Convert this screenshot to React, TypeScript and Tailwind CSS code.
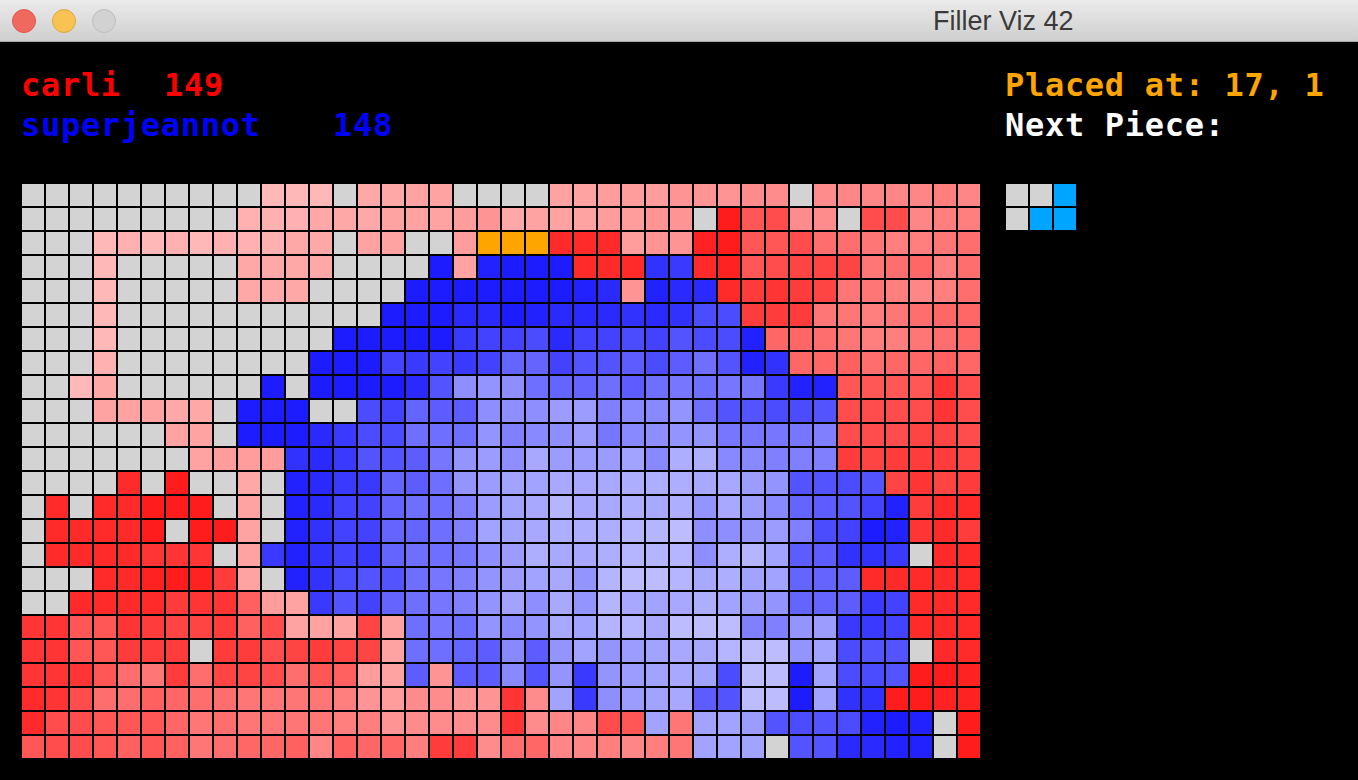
const board = [
  '..........UUU.SSRR....RRQQQPPPOO.ONNNNMN',
  '.........TTTSSSRRRQPSRRRQQPP.AHGOO.GGNMM',
  '...UTUTUTTTSS.RR..Q###CCCQPPBAHHGKKLMMLK',
  '...U.....SSSS....aRbaaaCCCdeCBHGFFFLKJMK',
  '...U.....SSS....aaaaaaabcPbccCEDEFLLMNMK',
  '...U...........aaaccabcccdcdggEEELLMLKJJ',
  '...U.........aaaaaeffgcffgfhggbJJKLMMLKJ',
  '...T........aaafefefjjfhhigikhbdJJIKJJIJ',
  '..US......a.aaaachopokjjkiklkllebbHHHHDG',
  '...RRRSS.aaa..gfjiioooqqmnnpkhhgghGGGGDG',
  '......RR.aaaceggkkkpmnoqlnoppllllmGGGFFG',
  '.......RQQQdcehhilpqosqqqrnttnnmmmEFEEEF',
  '....C.A..S.bceejikpqrrssstttssqphhghFDFE',
  '.C.CCAAA.R.bcffjkkmqrsusststpsqnjihfbECC',
  '.CCCCA.AAR.bdffjjkmrrstttuuvoopqmgfabDCE',
  '.CCCCDDD.Rebdfejkkloqtsstuuuoturiidde.CC',
  '...CCBABER.bdghhklmpqrspuvvustrrjjiCCCCC',
  '..CCCCEDDIQRehfjklmprospusrstrqpjjiefCCC',
  'DDHHDEFFEIGRRRFRklkpnpsruusvvvmmpqeefCCC',
  'DDHHEEE.EEGFEFFRkkjiniprpqrssuvvprghh.CC',
  'DDDHKLEKFFGKHIQRiPiinhpepqrsrgvvargghAAB',
  'CDGKKIJKKLLLLMPQOOPPDOreoqrsihvvarddAABB',
  'CGGHHHJLKLLLLMMPOOOODONNGHrLrrqhghgbab.A',
  'HGGHIHILKJJINIJJMEEOKJNNMNMLrrr.hhccbb.A',
];

const levels: Record<string, string> = {
  A: '1c', B: '22', C: '2a', D: '34', E: '3c', F: '44', G: '4c', H: '56', I: '60', J: '66', K: '6e',
  L: '76', M: '7e', N: '86', O: '8c', P: '94', Q: '9c', R: 'a2', S: 'a8', T: 'b0', U: 'b8', V: 'c0',
  a: '1c', b: '22', c: '2a', d: '32', e: '3a', f: '42', g: '4c', h: '54', i: '5c', j: '64', k: '6e',
  l: '76', m: '80', n: '88', o: '8e', p: '94', q: '9c', r: 'a2', s: 'a8', t: 'ae', u: 'b4', v: 'bc',
};

function cellColor(ch: string) {
  if (ch === '.') return '#d3d3d3';
  if (ch === '#') return '#ffa500';
  const v = levels[ch];
  return ch === ch.toUpperCase() ? `#ff${v}${v}` : `#${v}${v}ff`;
}

const piece = ['..x', '.xx'];

export default function App() {
  return (
    <div className="h-[780px] w-[1358px] overflow-hidden bg-black font-['DejaVu_Sans_Mono',monospace] text-[32px] leading-[40px] font-bold">
      <div className="flex h-[42px] items-center border-b border-[#a8a8a8] bg-gradient-to-b from-[#ebebeb] to-[#cfcfcf]">
        <div className="flex gap-4 pl-3">
          <span className="h-6 w-6 rounded-full border border-[#e0564c] bg-[#f0695f]" />
          <span className="h-6 w-6 rounded-full border border-[#e0a63e] bg-[#f8c352]" />
          <span className="h-6 w-6 rounded-full border border-[#bdbdbd] bg-[#d2d2d2]" />
        </div>
        <div className="ml-[817px] font-['Liberation_Sans',sans-serif] text-[27px] font-normal text-[#3a3a3a]">Filler Viz 42</div>
      </div>

      <div className="flex pt-[23px] pl-[22px]">
        <div>
          <div className="-ml-px h-20 tracking-[0.7px]">
            <div className="flex text-[#ff0000]">
              <span className="w-[143px]">carli</span>
              <span>149</span>
            </div>
            <div className="flex text-[#0000ff]">
              <span className="w-[312px]">superjeannot</span>
              <span>148</span>
            </div>
          </div>
          <div className="mt-[39px] grid grid-cols-[repeat(40,22px)] gap-[2px]">
            {board.flatMap((row, y) =>
              row.split('').map((ch, x) => (
                <div key={`${x}-${y}`} className="h-[22px]" style={{ backgroundColor: cellColor(ch) }} />
              )),
            )}
          </div>
        </div>

        <div className="ml-[26px]">
          <div className="-ml-px h-20 tracking-[0.7px]">
            <div className="text-[#ffa500]">Placed at: 17, 1</div>
            <div className="text-white">Next Piece:</div>
          </div>
          <div className="mt-[39px] grid grid-cols-[repeat(3,22px)] gap-[2px]">
            {piece.flatMap((row, y) =>
              row.split('').map((ch, x) => (
                <div key={`${x}-${y}`} className={ch === 'x' ? 'h-[22px] bg-[#00a5ff]' : 'h-[22px] bg-[#d3d3d3]'} />
              )),
            )}
          </div>
        </div>
      </div>
    </div>
  );
}
